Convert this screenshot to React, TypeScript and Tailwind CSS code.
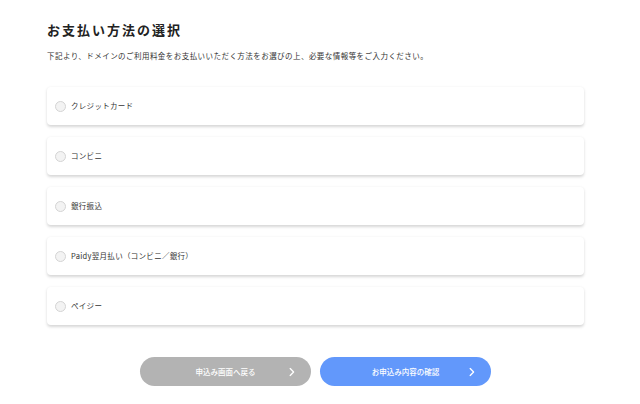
const FONT = { fontFamily: '"Noto Sans CJK JP", "Noto Sans", sans-serif' };

const methods = [
  "クレジットカード",
  "コンビニ",
  "銀行振込",
  "Paidy翌月払い（コンビニ／銀行）",
  "ペイジー",
];

function Chevron() {
  return (
    <svg width="6" height="9" viewBox="0 0 6 9" fill="none">
      <path d="M1.2 1 L4.6 4.5 L1.2 8" stroke="white" strokeWidth="1.3" strokeLinecap="round" strokeLinejoin="round" />
    </svg>
  );
}

export default function App() {
  return (
    <div className="min-h-screen bg-white text-[#333]" style={FONT}>
      <div className="w-[537px] pl-[47px] box-content pt-[21px]">
        <h1 className="text-[13px] font-bold tracking-[2px] leading-[18px] text-[#222]">
          お支払い方法の選択
        </h1>
        <p className="mt-[11px] text-[7.5px] leading-[12px] tracking-[0.45px] text-[#333]">
          下記より、ドメインのご利用料金をお支払いいただく方法をお選びの上、必要な情報等をご入力ください。
        </p>

        <div className="mt-[25px] flex flex-col gap-[12px]">
          {methods.map((m) => (
            <label
              key={m}
              className="flex h-[38px] items-center gap-[5px] rounded-[4px] bg-white px-[8px] shadow-[0_1.5px_3px_rgba(0,0,0,0.16)]"
            >
              <span className="h-[11px] w-[11px] shrink-0 rounded-full border border-[#d4d4d4] bg-[#f3f3f3]" />
              <span className="text-[7.5px] tracking-[0.3px] text-[#333]">{m}</span>
            </label>
          ))}
        </div>

        <div className="mt-[32px] flex justify-center gap-[9px]">
          <button className="relative flex h-[29px] w-[171px] items-center justify-center rounded-full bg-[#b3b3b3] text-[7.5px] font-medium text-white">
            申込み画面へ戻る
            <span className="absolute right-[16px] top-1/2 -translate-y-1/2">
              <Chevron />
            </span>
          </button>
          <button className="relative flex h-[29px] w-[171px] items-center justify-center rounded-full bg-[#6298fb] text-[7.5px] font-medium text-white">
            お申込み内容の確認
            <span className="absolute right-[16px] top-1/2 -translate-y-1/2">
              <Chevron />
            </span>
          </button>
        </div>
      </div>
    </div>
  );
}
